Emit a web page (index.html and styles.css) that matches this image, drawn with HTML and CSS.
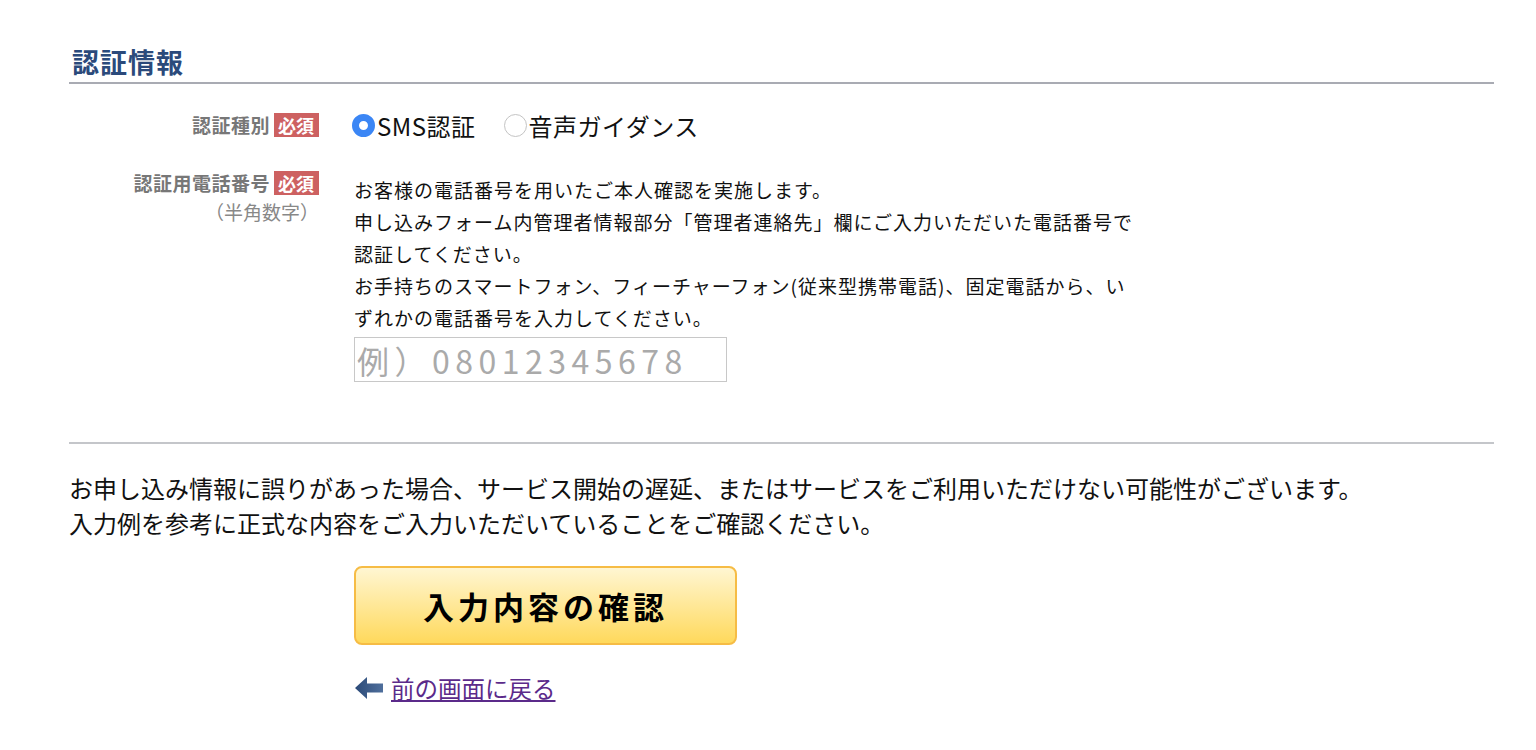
FILE: index.html
```html
<!DOCTYPE html>
<html lang="ja">
<head>
    <meta charset="UTF-8">
    <meta name="viewport" content="width=device-width, initial-scale=1.0">
    <title>認証情報</title>
    <link rel="stylesheet" href="styles.css">
</head>
<body>
    <div class="wrap">
        <h2 class="section-title">認証情報</h2>

        <div class="form-grid">
            <div class="label label-first">認証種別<span class="req">必須</span></div>
            <div class="field radios">
                <label class="radio"><input type="radio" name="authType" checked>SMS認証</label>
                <label class="radio"><input type="radio" name="authType">音声ガイダンス</label>
            </div>

            <div class="label label-second">
                <div>認証用電話番号<span class="req">必須</span></div>
                <div class="hint">（半角数字）</div>
            </div>
            <div class="field">
                <p class="desc">お客様の電話番号を用いたご本人確認を実施します。<br>申し込みフォーム内管理者情報部分「管理者連絡先」欄にご入力いただいた電話番号で認証してください。<br>お手持ちのスマートフォン、フィーチャーフォン(従来型携帯電話)、固定電話から、いずれかの電話番号を入力してください。</p>
                <input class="tel-input" type="text" placeholder="例）08012345678">
            </div>
        </div>

        <hr class="sep">

        <p class="notice">お申し込み情報に誤りがあった場合、サービス開始の遅延、またはサービスをご利用いただけない可能性がございます。<br>入力例を参考に正式な内容をご入力いただいていることをご確認ください。</p>

        <div class="actions">
            <button class="confirm-btn" type="button">入力内容の確認</button>
            <a class="back-link" href="#">
                <svg width="30" height="26" viewBox="0 0 30 26">
                    <defs>
                        <linearGradient id="arrowGrad" x1="0" y1="0" x2="1" y2="0">
                            <stop offset="0" stop-color="#2b4a78"/>
                            <stop offset="1" stop-color="#4f6f9c"/>
                        </linearGradient>
                    </defs>
                    <path d="M1 13 L13 2 L13 8.5 L29 8.5 L29 17.5 L13 17.5 L13 24 Z" fill="url(#arrowGrad)"/>
                </svg>
                <span>前の画面に戻る</span>
            </a>
        </div>
    </div>
</body>
</html>
```

FILE: styles.css
```css
body {
    margin: 0;
    font-family: "Noto Sans CJK JP", "Noto Sans", sans-serif;
    color: #111;
    background: #fff;
}
.wrap {
    padding: 0 42px 40px 69px;
}
.section-title {
    margin: 0;
    padding: 44px 0 2px 3px;
    font-size: 27px;
    line-height: 36px;
    letter-spacing: 1px;
    font-weight: bold;
    color: #2b4a7b;
    border-bottom: 2px solid #a9abb3;
}
.form-grid {
    display: grid;
    grid-template-columns: 250px 1fr;
    column-gap: 35px;
    row-gap: 26px;
    padding-top: 21px;
}
.label {
    text-align: right;
    font-size: 19px;
    font-weight: bold;
    color: #777;
    letter-spacing: 0.5px;
}
.label-first {
    line-height: 40px;
}
.label-second {
    line-height: 24px;
}
.req {
    display: inline-block;
    margin-left: 4px;
    padding: 0 5px 0 4px;
    background: #cd6161;
    color: #fff;
    font-size: 18px;
    line-height: 24px;
    letter-spacing: 0;
}
.hint {
    margin-top: 5px;
    font-weight: normal;
    font-size: 19px;
    color: #888;
    letter-spacing: 0;
}
.radios {
    display: flex;
    align-items: center;
    gap: 28px;
    height: 40px;
    margin-left: -2px;
}
.radio {
    display: flex;
    align-items: center;
    font-size: 24px;
    letter-spacing: 0.5px;
}
.radio input {
    appearance: none;
    -webkit-appearance: none;
    width: 23px;
    height: 23px;
    margin: 0 2px 0 0;
    border-radius: 50%;
    border: 1px solid #c4c4c4;
    background: #fff;
    box-sizing: border-box;
}
.radio input:checked {
    border: 7px solid #3b86f5;
}
.desc {
    margin: 3px 0 0;
    width: 790px;
    font-size: 19px;
    line-height: 32px;
    letter-spacing: 1px;
}
.tel-input {
    display: block;
    margin-top: 3px;
    width: 373px;
    height: 45px;
    box-sizing: border-box;
    border: 1px solid #c8c8c8;
    padding: 0 2px;
    font-family: inherit;
    font-size: 32px;
    letter-spacing: 5.5px;
}
.tel-input::placeholder {
    color: #aaa;
}
.sep {
    margin: 60px 0 0;
    border: none;
    border-top: 2px solid #c4c6ca;
}
.notice {
    margin: 26px 0 0;
    font-size: 24px;
    line-height: 35px;
}
.actions {
    padding-left: 285px;
}
.confirm-btn {
    display: block;
    margin-top: 26px;
    width: 383px;
    height: 79px;
    border: 2px solid #f6bc45;
    border-radius: 8px;
    background: linear-gradient(to bottom, #fff6d2, #ffd95c);
    font-family: inherit;
    font-size: 31px;
    font-weight: bold;
    letter-spacing: 4px;
    color: #000;
    cursor: pointer;
}
.back-link {
    display: inline-flex;
    align-items: center;
    gap: 7px;
    margin-top: 28px;
    font-size: 23.5px;
    line-height: 30px;
    color: #5b2a8a;
}
```
